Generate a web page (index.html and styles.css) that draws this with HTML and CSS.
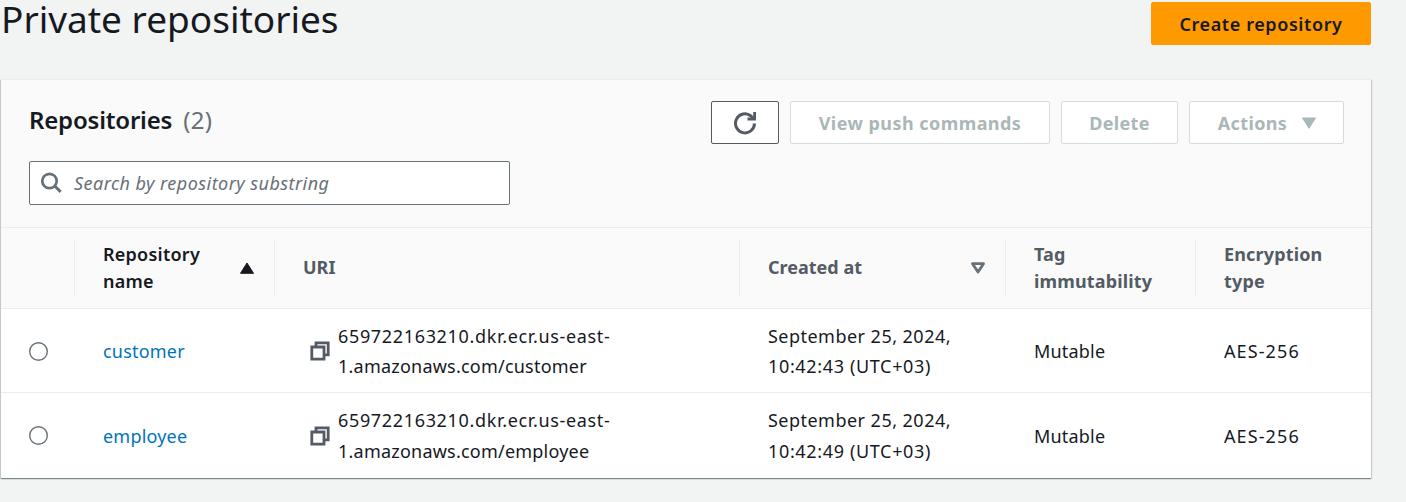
FILE: index.html
```
<!DOCTYPE html>
<html lang="en">
<head>
<meta charset="utf-8">
<title>Private repositories</title>
<link rel="stylesheet" href="styles.css">
</head>
<body>
<svg width="0" height="0" class="defs">
  <symbol id="copy" viewBox="0 0 20 20"><path d="M6 5.500V1.800H18.200V13.800H14.500M1.800 6H14V18.200H1.800z" fill="none" stroke="#545b64" stroke-width="2.8"/></symbol>
  <symbol id="radio" viewBox="0 0 19 19"><circle cx="9.500" cy="9.500" r="8.800" fill="#fff" stroke="#687078" stroke-width="1.400"/></symbol>
</svg>
<header class="page-header">
  <h1 class="title">Private repositories</h1>
  <button class="btn primary"><span class="t-create">Create repository</span></button>
</header>
<main class="card">
  <div class="toolbar">
    <h2 class="heading">Repositories<span class="count">(2)</span></h2>
    <div class="actions">
      <button class="btn refresh" aria-label="Refresh">
        <svg width="24" height="24" viewBox="0 0 24 24" fill="none" stroke="#545b64" stroke-width="3"><path d="M21.500 12.500A9.500 9.500 0 1 1 18 5L20.500 7.500"/><path d="M21.600 1v7H14.500" stroke-width="2.8"/></svg>
      </button>
      <button class="btn push"><span class="t-push">View push commands</span></button>
      <button class="btn delete"><span class="t-delete">Delete</span></button>
      <button class="btn menu"><span class="t-actions">Actions</span><svg width="16" height="12" viewBox="0 0 16 12"><path d="M1.500 1h13L8 11.300z" fill="#aab7b8" stroke="#aab7b8" stroke-linejoin="round"/></svg></button>
    </div>
  </div>
  <div class="search">
    <svg width="22" height="22" viewBox="0 0 22 22" fill="none" stroke="#687078" stroke-width="2.7"><circle cx="8.500" cy="9" r="7.200"/><path d="M13.700 14l6 5.800" stroke-width="3"/></svg>
    <span class="placeholder">Search by repository substring</span>
  </div>
  <div class="row head">
    <div class="cell"></div>
    <div class="cell sorted"><span class="t-name">Repository<br>name</span><svg width="16" height="12" viewBox="0 0 16 12"><path d="M1.500 11.300h13L8 1z" fill="#16191f" stroke="#16191f" stroke-linejoin="round"/></svg></div>
    <div class="cell"><span class="t-uri">URI</span></div>
    <div class="cell"><span class="t-created">Created at</span><svg width="16" height="12" viewBox="0 0 16 12"><path d="M2.500 1.700h11L8 10z" fill="none" stroke="#687078" stroke-width="2.8" stroke-linejoin="round"/></svg></div>
    <div class="cell"><span class="t-tag">Tag<br>immutability</span></div>
    <div class="cell"><span class="t-enc">Encryption<br>type</span></div>
  </div>
  <div class="row first">
    <div class="cell"><svg class="radio" width="19" height="19"><use href="#radio"/></svg></div>
    <div class="cell"><a>customer</a></div>
    <div class="cell uri"><svg width="20" height="20"><use href="#copy"/></svg><span><span class="t-host">659722163210.dkr.ecr.us-east-</span><br><span class="t-path">1.amazonaws.com/customer</span></span></div>
    <div class="cell"><span><span class="t-date">September 25, 2024,</span><br><span class="t-time">10:42:43 (UTC+03)</span></span></div>
    <div class="cell"><span class="t-mutable">Mutable</span></div>
    <div class="cell"><span class="t-aes">AES-256</span></div>
  </div>
  <div class="row last">
    <div class="cell"><svg class="radio" width="19" height="19"><use href="#radio"/></svg></div>
    <div class="cell"><a>employee</a></div>
    <div class="cell uri two-line"><svg width="20" height="20"><use href="#copy"/></svg><span><span class="t-host">659722163210.dkr.ecr.us-east-</span><br><span class="t-path">1.amazonaws.com/employee</span></span></div>
    <div class="cell two-line"><span><span class="t-date">September 25, 2024,</span><br><span class="t-time">10:42:49 (UTC+03)</span></span></div>
    <div class="cell"><span class="t-mutable">Mutable</span></div>
    <div class="cell"><span class="t-aes">AES-256</span></div>
  </div>
</main>
</body>
</html>
```
FILE: styles.css
```
* { box-sizing: border-box; }
body {
  margin: 0;
  height: 502px;
  overflow: hidden;
  background: #f2f3f3;
  color: #16191f;
  font: 18px/30px "Noto Sans", sans-serif;
  white-space: nowrap;
}
.defs { display: none; }
.page-header {
  display: flex;
  justify-content: space-between;
  align-items: flex-start;
  width: 1371px;
  height: 79px;
  padding-top: 2px;
}
.title { margin: -2px 0 0; padding-left: 1px; font-size: 37px; font-weight: 400; line-height: 38px; }
.btn {
  display: flex;
  align-items: center;
  justify-content: center;
  height: 43px;
  padding: 0;
  border: 1px solid #d5dbdb;
  border-radius: 2px;
  background: #fff;
  color: #aab7b8;
  font: 700 18px/30px "Noto Sans", sans-serif;
}
.primary { width: 220px; border-color: #ff9900; background: #ff9900; color: #16191f; font-weight: 600; }
.card {
  width: 1370px;
  height: 399px;
  margin-left: 1px;
  padding-top: 22px;
  border-top: 1px solid #eaeded;
  background: #fafafa;
  box-shadow: 0 1px 1px 0 rgba(0, 28, 36, .3), 1px 1px 1px 0 rgba(0, 28, 36, .15), -1px 1px 1px 0 rgba(0, 28, 36, .15);
}
.toolbar { display: flex; justify-content: space-between; height: 59px; padding: 0 27px 0 28px; }
.heading { margin: 2px 0 0; font-size: 24px; font-weight: 600; line-height: 32px; letter-spacing: -.2px; }
.count { margin-left: 11px; color: #687078; font-weight: 400; letter-spacing: .3px; }
.actions { display: flex; gap: 11px; margin-top: -1px; }
.refresh { width: 68px; border-color: #545b64; }
.push { width: 260px; }
.delete { width: 117px; }
.menu { width: 155px; gap: 14px; padding-left: 2px; }
.search {
  display: flex;
  align-items: center;
  gap: 11px;
  width: 481px;
  height: 44px;
  margin: 0 0 22px 28px;
  padding-left: 11px;
  border: 1px solid #687078;
  border-radius: 2px;
  background: #fff;
  color: #687078;
  font-style: italic;
}
.row {
  display: grid;
  grid-template-columns: 74px 200px 465px 266px 190px 175px;
  border-top: 1px solid #eaeded;
  background: #fff;
}
.cell { display: flex; align-items: center; padding-left: 28px; }
.head { height: 81px; padding: 12px 0; background: #fafafa; color: #545b64; font-weight: 700; line-height: 27px; }
.head .cell { justify-content: space-between; padding-right: 19px; border-right: 1px solid #eaeded; }
.head .cell:last-child { border-right: 0; }
.head .sorted { color: #16191f; font-weight: 600; }
.t-uri, .t-created { margin-top: -1px; }
.first { height: 84px; }
.last { height: 86px; }
.two-line { line-height: 31px; }
.cell a { color: #0073bb; }
.uri { gap: 8px; padding-left: 35px; }
.first .radio { margin-top: 1px; }
.last .radio { margin-bottom: 1px; }
/* Tracking per label */
.t-create { letter-spacing: .6px; }
.t-push { letter-spacing: .45px; }
.t-delete, .t-actions { letter-spacing: .35px; }
.placeholder { letter-spacing: .46px; }
.t-name { letter-spacing: .25px; }
.t-tag, .t-enc { letter-spacing: .15px; }
.t-host { letter-spacing: .66px; }
.t-path { letter-spacing: .22px; }
.t-date { letter-spacing: .47px; }
.t-time { letter-spacing: .65px; }
.t-mutable, .cell a { letter-spacing: .2px; }
.t-aes { letter-spacing: 1.1px; }
```
